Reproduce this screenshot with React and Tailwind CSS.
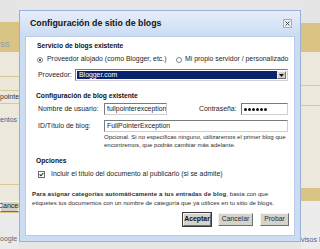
const Radio = ({ checked }) => (
  <span className="w-[6px] h-[6px] rounded-full border border-[#7d8794] bg-white flex items-center justify-center shrink-0">
    {checked && <span className="w-[2px] h-[2px] rounded-full bg-[#1e1e1e]" />}
  </span>
);

const Input = ({ className, children }) => (
  <div className={"h-[12px] bg-white border border-[#7a7a7a] border-r-[#cfcfcf] border-b-[#cfcfcf] flex items-center pl-[2px] overflow-hidden whitespace-nowrap text-[#1a1a1a] " + className}>
    {children}
  </div>
);

const Btn = ({ w, bold, children }) => (
  <div className={"h-[13px] bg-[#d6d3cd] border border-[#f4f3f0] border-r-[#6e6e6e] border-b-[#6e6e6e] flex items-center justify-center text-[6.9px] " + w + (bold ? " font-bold text-[#111] outline outline-1 outline-[#3c3c3c]" : " text-[#2a2a2a]")}>
    {children}
  </div>
);

export default function App() {
  return (
    <div className="relative w-[320px] h-[249px] overflow-hidden bg-[#e6e6e6] font-['Liberation_Sans',Arial,sans-serif]">
      {/* page behind dialog */}
      <div className="flex h-full">
        <div className="w-[19px] flex flex-col overflow-hidden">
          <div className="h-[22px] bg-[#e5e5e5] shrink-0" />
          <div className="h-[30px] bg-[#d9c484] shrink-0 pt-[19px] text-[7.2px] leading-[8px] text-[#8497ab] whitespace-nowrap">SS</div>
          <div className="h-[24px] bg-[#ece8dc] shrink-0" />
          <div className="h-[14px] bg-[#ebe7da] border-t border-[#d8c996] shrink-0" />
          <div className="h-[13px] bg-[#ece8dc] border-t border-[#d8c996] shrink-0 text-[7px] leading-[11px] text-[#333] whitespace-nowrap">pointe</div>
          <div className="h-[81px] bg-[#ece8dc] border-t border-[#d8c996] shrink-0 pt-[12px] text-[7px] leading-[8px] text-[#3d5f9e] whitespace-nowrap">entos a</div>
          <div className="h-[29px] bg-[#ece8dc] border-t border-[#d8c996] border-b-2 border-b-[#d9c484] shrink-0 pt-[16px]">
            <div className="h-[11px] bg-[#d4d0c8] border border-[#f3f3f3] border-b-[#707070] flex items-center text-[7px] text-[#222] whitespace-nowrap">
              <span className="-ml-[3px]">Cancel</span>
            </div>
          </div>
          <div className="flex-1 bg-[#eaeaea] pt-[22px] text-[7px] leading-[8px] text-[#666] whitespace-nowrap">oogle -</div>
        </div>
        <div className="flex-1 bg-[#e6e6e6]" />
        <div className="w-[19px] flex flex-col overflow-hidden">
          <div className="h-[23px] bg-[#e5e5e5] shrink-0" />
          <div className="h-[29px] bg-[#d9c484] shrink-0" />
          <div className="h-[33px] bg-[#ece8dc] shrink-0" />
          <div className="h-[20px] bg-[#ece8dc] border-t border-[#d8c996] shrink-0" />
          <div className="h-[83px] bg-[#ece8dc] border-t border-[#d8c996] shrink-0" />
          <div className="h-[13px] bg-[#d9c484] shrink-0" />
          <div className="flex-1 bg-[#ececec] pt-[35px] text-[7px] leading-[8px] text-[#3d5f9e] whitespace-nowrap">visos l</div>
        </div>
      </div>

      {/* dialog */}
      <div className="absolute left-[19px] top-[10px] w-[282px] h-[232px] border border-[#98b1d8] bg-[#cbdcf3] flex flex-col px-[5px] pb-[5px]">
        <div className="h-[25px] -mx-[5px] px-[5px] bg-linear-to-b from-[#e6eefa] to-[#cbdcf3] flex items-center justify-between pl-[10px] pr-[8px] shrink-0">
          <span className="text-[8.8px] font-bold text-[#141414] whitespace-nowrap">Configuración de sitio de blogs</span>
          <span className="w-[9px] h-[9px] border border-[#a3b0c2] bg-[#e8edf5] flex items-center justify-center">
            <svg width="5" height="5" viewBox="0 0 5 5">
              <path d="M0.5 0.5 L4.5 4.5 M4.5 0.5 L0.5 4.5" stroke="#4a4a4a" strokeWidth="1" />
            </svg>
          </span>
        </div>
        <div className="flex-1 bg-white border border-[#b9cbe6] flex flex-col text-[6.9px] text-[#1e1e1e] leading-none">
          {/* Servicio */}
          <div className="mt-[4px] h-[10px] flex items-center pl-[11px] font-bold text-[6.7px] text-[#111] whitespace-nowrap">Servicio de blogs existente</div>
          <div className="mt-[3px] h-[11px] flex items-center pl-[11px] whitespace-nowrap">
            <div className="w-[139px] flex items-center gap-[4px]">
              <Radio checked />
              <span>Proveedor alojado (como Blogger, etc.)</span>
            </div>
            <div className="flex items-center gap-[3px]">
              <Radio />
              <span>Mi propio servidor / personalizado</span>
            </div>
          </div>
          <div className="mt-[4px] h-[12px] flex items-center pl-[12px] whitespace-nowrap">
            <span className="w-[37px]">Proveedor:</span>
            <div className="w-[213px] h-[12px] border border-[#7a7a7a] border-r-[#cfcfcf] border-b-[#cfcfcf] bg-white p-[1px] flex">
              <div className="flex-1 bg-[#0a246a] text-white flex items-center pl-[2px]">Blogger.com</div>
              <div className="w-[9px] bg-[#d6d3cd] border border-[#f4f3f0] border-r-[#6e6e6e] border-b-[#6e6e6e] flex items-center justify-center">
                <svg width="5" height="3" viewBox="0 0 5 3"><path d="M0 0 H5 L2.5 3 Z" fill="#111" /></svg>
              </div>
            </div>
          </div>
          {/* Configuración */}
          <div className="mt-[10px] h-[10px] flex items-center pl-[10px] font-bold text-[6.7px] text-[#111] whitespace-nowrap">Configuración de blog existente</div>
          <div className="mt-[2px] h-[12px] flex items-center pl-[12px] whitespace-nowrap">
            <span className="w-[66px]">Nombre de usuario:</span>
            <Input className="w-[63px]">fullpointerexception</Input>
            <span className="ml-[32px] w-[42px]">Contraseña:</span>
            <Input className="w-[47px] gap-[1px] pl-[2px]">
              {[0, 1, 2, 3, 4, 5].map((i) => (
                <span key={i} className="w-[3px] h-[3px] rounded-full bg-[#111]" />
              ))}
            </Input>
          </div>
          <div className="mt-[5px] h-[12px] flex items-center pl-[12px] whitespace-nowrap">
            <span className="w-[66px]">ID/Título de blog:</span>
            <Input className="w-[184px]">FullPointerException</Input>
          </div>
          <div className="mt-[1px] pl-[78px] text-[6.05px] leading-[8px] text-[#2e2e2e] whitespace-nowrap">
            <div>Opcional. Si no especificas ninguno, utilizaremos el primer blog que</div>
            <div>encontremos, que podrás cambiar más adelante.</div>
          </div>
          {/* Opciones */}
          <div className="mt-[7px] h-[10px] flex items-center pl-[10px] font-bold text-[6.7px] text-[#111]">Opciones</div>
          <div className="mt-[3px] h-[10px] flex items-center pl-[12px] whitespace-nowrap">
            <span className="w-[7px] h-[7px] border border-[#6d6d6d] bg-white flex items-center justify-center shrink-0">
              <svg width="5" height="5" viewBox="0 0 5 5">
                <path d="M0.6 2.4 L2 3.8 L4.4 1" stroke="#222" strokeWidth="1.1" fill="none" />
              </svg>
            </span>
            <span className="ml-[6px]">Incluir el título del documento al publicarlo (si se admite)</span>
          </div>
          <div className="mt-[11px] pl-[6px] text-[6.1px] leading-[8.5px] text-[#2e2e2e] whitespace-nowrap">
            <div>
              <span className="font-bold tracking-[0.12px]">Para asignar categorías automáticamente a tus entradas de blog</span>, basta con que
            </div>
            <div>etiquetes tus documentos con un nombre de categoría que ya utilices en tu sitio de blogs.</div>
          </div>
          <div className="mt-[6px] flex items-center justify-end gap-[7px] pr-[5px]">
            <Btn w="w-[28px]" bold>Aceptar</Btn>
            <Btn w="w-[35px]">Cancelar</Btn>
            <Btn w="w-[29px]">Probar</Btn>
          </div>
        </div>
      </div>
    </div>
  );
}
